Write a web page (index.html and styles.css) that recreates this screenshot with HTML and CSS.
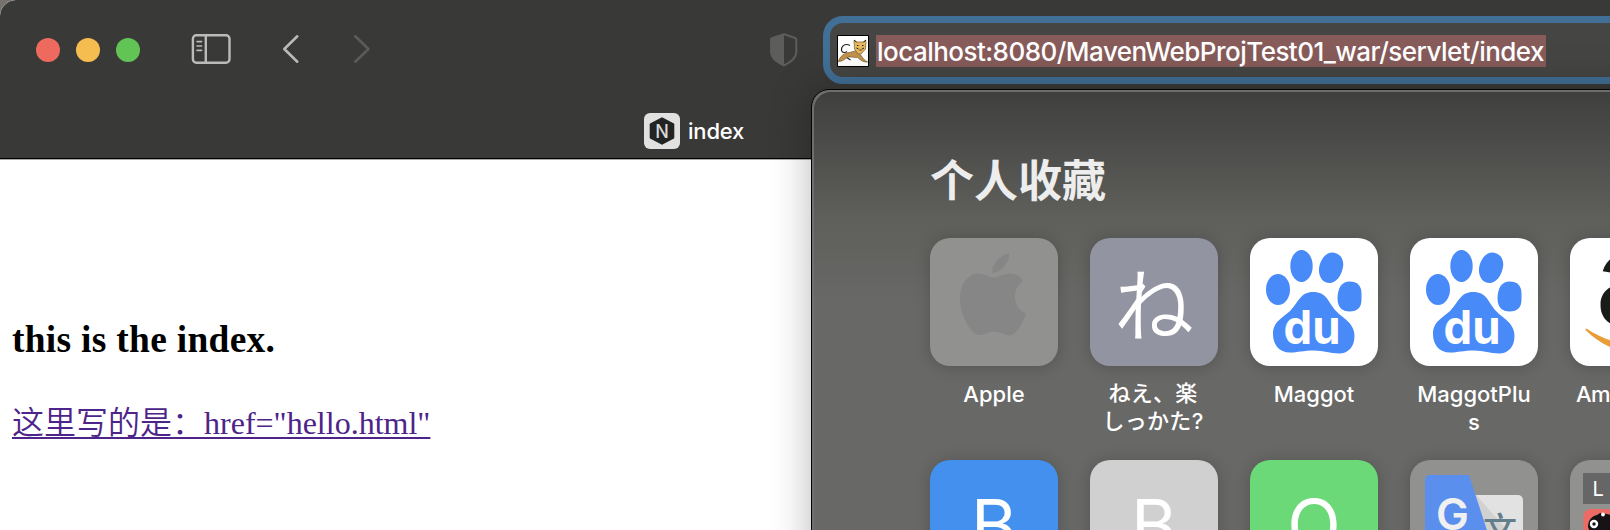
FILE: index.html
```html
<!DOCTYPE html>
<html lang="zh-CN">
<head>
<meta charset="utf-8">
<title>index</title>
<link rel="stylesheet" href="styles.css">
</head>
<body>
<div class="window">
  <header class="chrome">
    <div class="toolbar">
      <div class="lights"><span class="light red"></span><span class="light yellow"></span><span class="light green"></span></div>
      <svg class="sidebar-icon" width="40" height="32" viewBox="0 0 40 32" fill="none" stroke="#bbbbb9" stroke-width="2.4"><rect x="1.900" y="2.200" width="36.600" height="27.600" rx="3.500"/><path d="M14.800 2v28"/><path d="M6 8.600h4.600M6 13h4.600M6 17.400h4.600" stroke-width="1.600" stroke-linecap="round"/></svg>
      <svg class="back" width="18" height="30" viewBox="0 0 18 30" fill="none" stroke="#b9b9b7" stroke-width="2.6" stroke-linecap="round" stroke-linejoin="round"><path d="M15.300 2.300 2.300 15 15.300 27.700"/></svg>
      <svg class="forward" width="18" height="30" viewBox="0 0 18 30" fill="none" stroke="#5b5b59" stroke-width="2.6" stroke-linecap="round" stroke-linejoin="round"><path d="M2.200 2.300 15.500 15 2.200 27.700"/></svg>
      <svg class="shield" width="28" height="34" viewBox="0 0 28 34"><path d="M14 1.200 25.200 5c.8.3 1.100.8 1.100 1.600V19c0 6-5.200 10-12.300 13.300C6.900 29 1.200 25 1.200 19V6.600c0-.8.3-1.300 1.100-1.600z" fill="none" stroke="#5d5d5b" stroke-width="2"/><path d="M14 .5 2 4.600C.8 5 .3 5.600.3 6.800V19C.3 25.500 6 29.800 14 33.300z" fill="#5d5d5b"/></svg>
      <div class="address">
        <svg class="site-icon" width="32" height="32" viewBox="0 0 32 32"><path d="M.5.5h31v31H.5z" fill="#fff" stroke="#000"/><path d="M13 10.500C8 8 4 11 4.500 15.500 5.500 18 8 18 10 16.500M9 22l4.500 3" fill="none" stroke="#202020" stroke-width="1.100"/><path d="M1.200 26.500c2-5 5.500-8.500 11-9l6-1.500 6 4.500c1.500 3 3.500 5 6.500 6.500-4 .5-7-1.500-10-4.500-4 .5-8-2-12 1-2 1.500-3.500 3-7.500 3z" fill="#c1924a" stroke="#69502a" stroke-width=".6"/><path d="M17 5.500l3 1.500h6l3-1.500-.5 8.500-4.500 5h-3l-3.500-5z" fill="#e6b961" stroke="#73572b" stroke-width=".7"/><path d="M17 5l2.500 2M29 5l-2.500 2M20 10.500h1.500M25 10.500h1.500M22.500 15h2M19.500 13l2 1M27 13l-2 1" stroke="#2b2415"/></svg>
        <span class="url">localhost:8080/MavenWebProjTest01_war/servlet/index</span>
      </div>
    </div>
    <div class="tab">
      <svg width="36" height="36" viewBox="0 0 36 36"><rect width="36" height="36" rx="6" fill="#e1e1e1"/><path d="M18 4.300 29.500 10.300q.8.500.8 1.300V24.400q0 .8-.8 1.300L18 31.700 6.500 25.700q-.8-.5-.8-1.300V11.600q0-.8.8-1.300z" fill="#222323"/><text x="18" y="24.500" text-anchor="middle" font-family="Inter, sans-serif" font-size="18" fill="#d8d8d8">N</text></svg>
      <span>index</span>
    </div>
  </header>
  <main class="page">
    <h3>this is the index.</h3>
    <a href="#"><span class="han">这里写的是：</span>href="hello.html"</a>
  </main>
  <section class="popover">
    <h2>个人收藏</h2>
    <div class="grid">
      <div class="item"><div class="tile glass"><svg viewBox="0 0 128 128"><path d="M79 15.500c.8 8-7 18.500-16.700 19.500-1-9 8-18 16.700-19.500zM63.500 39.500c5 0 9-4 17-4 5 0 10 2.500 12.500 8-5 3-8 8-8 15 0 8 4 14 11 17-2.500 8-6 14-10.500 19-4.500 4.500-9 3-13 1-5-2.400-12-2.400-17 0-5 2.400-9 2.400-13-2-9-9.500-14-25-12.200-38.500C32 43 40 35.500 48.500 35.500c6 0 10 4 15 4z" fill="#868686"/></svg></div><p>Apple</p></div>
      <div class="item"><div class="tile lavender kana">ね</div><p class="japanese">ねえ、楽<br>しっかた?</p></div>
      <div class="item"><div class="tile white"><svg viewBox="0 0 128 128"><use href="#paw"/><text class="du" x="33.500" y="106" textLength="57" lengthAdjust="spacingAndGlyphs">du</text></svg></div><p>Maggot</p></div>
      <div class="item"><div class="tile white"><svg viewBox="0 0 128 128"><g id="paw" fill="#478af8"><ellipse cx="28" cy="51.500" rx="12" ry="15.500"/><ellipse cx="51.500" cy="28" rx="11.200" ry="16"/><path d="M82 14.500c7 0 12.500 6 11 14.500-1.500 9-7 16-13.500 16-6.500 0-11-6-10.500-14 .6-8.500 6.500-16.500 13-16.500z"/><path d="M99.500 43.500c8 0 12 4.500 12 12v6c0 8-4 12-12 12-7 0-12-4-12-13 0-10 4-17 12-17z"/><path d="M63 54c14 0 14 9 23 19 7 7.500 18.500 12 18.500 25 0 10-5.500 17.500-15.500 17.500-9 0-15-3-25-3-11 0-16 2-24 2-11 0-17-8-17-18.500 0-13 10-16 18-24 8-9 10-18 22-18z"/></g><text class="du" x="33.500" y="106" textLength="57" lengthAdjust="spacingAndGlyphs">du</text></svg></div><p>MaggotPlu<br>s</p></div>
      <div class="item"><div class="tile white"><svg viewBox="0 0 128 128"><text x="26" y="88" font-family="Inter, sans-serif" font-weight="700" font-size="136" fill="#191b19">a</text><path d="M16.500 90.500C32 101 48 106 64 106c17 0 33-3 48-9-14 12-31 17-48 17-19 0-35-9-48-21.500-.8-1.200-.5-2.500.5-2z" fill="#ea9c38"/></svg></div><p class="start">Am</p></div>
      <div class="item"><div class="tile blue">B</div></div>
      <div class="item"><div class="tile silver">B</div></div>
      <div class="item"><div class="tile lime">Q</div></div>
      <div class="item"><div class="tile glass"><svg viewBox="0 0 128 128"><rect x="55" y="35" width="58" height="78" rx="5" fill="#e2e2e2"/><path d="M66 35l40 45H66z" fill="#c8c8c8" opacity=".65"/><text x="73" y="82" font-family="Noto Sans CJK SC, sans-serif" font-weight="500" font-size="34" fill="#627e8b">文</text><path d="M20 15h39l27 83H20q-5 0-5-5V20q0-5 5-5z" fill="#5b8fee"/><text x="26" y="70" font-family="Inter, sans-serif" font-weight="600" font-size="44" fill="#f0f0f0">G</text></svg></div></div>
      <div class="item"><div class="tile glass"><svg viewBox="0 0 128 128"><path d="M13 13h31v31H13z" fill="#666"/><text x="22.500" y="36" font-family="Inter, sans-serif" font-size="20" fill="#fff">L</text><rect x="13.500" y="49" width="31" height="31" rx="7" fill="#ed6b65"/><path d="M18 67c0-7 4-11 9-12l3-2 7 1 8 2v24H23z" fill="#171314"/><circle cx="24" cy="64" r="4.200" fill="#fff"/><circle cx="24" cy="64" r="1.700" fill="#151515"/><circle cx="33" cy="54.500" r="1.900" fill="#fff"/></svg></div></div>
    </div>
  </section>
</div>
</body>
</html>
```
FILE: styles.css
```css
* { box-sizing: border-box; }
body { margin: 0; overflow: hidden; background: #77716d; }
.window { position: relative; width: 1610px; height: 530px; overflow: hidden; border-top-left-radius: 16px; background: #fff; font-family: Inter, "Noto Sans CJK SC", sans-serif; }
.chrome { height: 160px; background: #393937; border-bottom: 1px solid #aaa; box-shadow: inset 0 -1px #000; border-top-left-radius: 16px; }
.toolbar { display: flex; align-items: flex-start; height: 100px; padding-left: 36px; }
.lights { display: flex; gap: 16px; padding-top: 38px; }
.light { width: 24px; height: 24px; border-radius: 50%; }
.red { background: #ee6a5f; }
.yellow { background: #f5bd4f; }
.green { background: #61c455; }
.toolbar svg { flex: none; }
.sidebar-icon { margin: 33px 0 0 51px; }
.back { margin: 34px 0 0 51px; }
.forward { margin: 34px 0 0 53px; }
.shield { margin: 33px 0 0 399px; }
.address { display: flex; align-items: center; flex: 1; margin: 16px -30px 0 25px; height: 68px; border: 7px solid #416f96; border-radius: 20px; background: #454543; padding-left: 7px; }
.address .site-icon { margin-top: 2px; }
.url { flex: none; width: 670px; height: 32px; margin: 2px 0 0 7px; padding-left: 1px; background: #865b5a; color: #fff; font-size: 26px; line-height: 34px; letter-spacing: -0.53px; white-space: nowrap; font-weight: 500; }
.tab { display: flex; align-items: center; gap: 8px; padding: 13px 0 0 644px; color: #fff; font-size: 22px; font-weight: 500; letter-spacing: -0.2px; }
.page { padding: 145px 12px 0; }
.page h3 { margin: 0; font: bold 37.44px/70px "Liberation Serif", serif; letter-spacing: 0.3px; color: #000; }
.page a { display: inline-block; margin-top: 21px; color: #4d2489; font: 32px/48px "Liberation Serif", serif; text-decoration-thickness: 2px; text-underline-offset: 3px; text-decoration-skip-ink: none; }
.han { font-family: "Noto Sans CJK SC", sans-serif; font-size: 32px; font-weight: 350; }
.popover { position: absolute; left: 811px; top: 89px; width: 850px; height: 500px; padding: 60px 0 0 116px; border: 1px solid #050505; border-radius: 18px; background: linear-gradient(#3f3f3d 0, #4b4b49 50px, #5e5e5b 125px, #686866 210px, #686866 100%); box-shadow: inset 2px 2px #6d6f6f, 0 0 40px rgba(0,0,0,.28); }
.popover h2 { margin: 0 0 25px 2px; height: 63px; line-height: 63px; color: #ededed; font-size: 44px; font-weight: 700; }
.grid { display: grid; grid-template-columns: repeat(5, 128px); gap: 0 32px; grid-auto-rows: 222px; padding-left: 2px; }
.tile { display: flex; align-items: center; justify-content: center; width: 128px; height: 128px; border-radius: 20px; overflow: hidden; color: #fff; font-size: 70px; font-weight: 400; box-shadow: 0 1px 16px rgba(0,0,0,.2); }
.tile svg { width: 128px; height: 128px; }
.glass { background: #91918f; }
.lavender { background: #9394a1; }
.white { background: #fff; }
.blue { background: #4390ef; }
.silver { background: #d0d0d0; }
.lime { background: #6bd977; }
.kana { padding-bottom: 4px; font-family: "Noto Sans CJK JP", sans-serif; font-size: 80px; font-weight: 350; }
.du { font: 700 47px Inter, sans-serif; fill: #fff; }
.item p { margin: 14px -10px 0; text-align: center; color: #fff; font: 500 22px/28px Inter, "Noto Sans CJK JP", sans-serif; }
.item .japanese { margin: 13px -9px 0 -11px; letter-spacing: 0.3px; }
.item .start { margin: 14px 0 0 6px; text-align: left; letter-spacing: -0.5px; }
```
